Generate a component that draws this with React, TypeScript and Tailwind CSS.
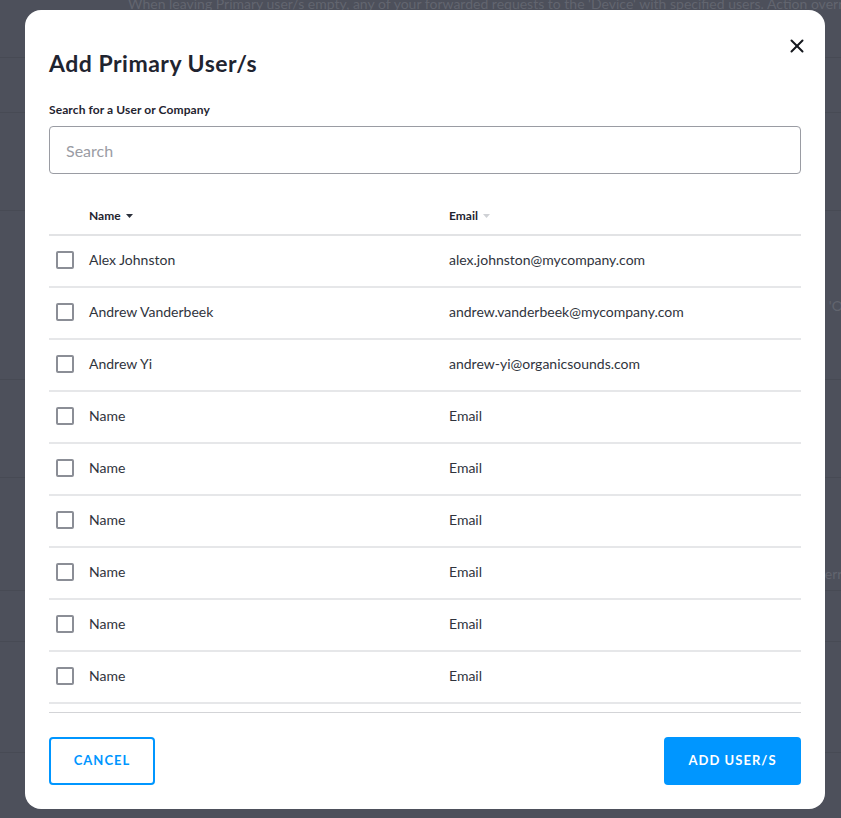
import { X } from "lucide-react";

interface User {
  name: string;
  email: string;
}

const users: User[] = [
  { name: "Alex Johnston", email: "alex.johnston@mycompany.com" },
  { name: "Andrew Vanderbeek", email: "andrew.vanderbeek@mycompany.com" },
  { name: "Andrew Yi", email: "andrew-yi@organicsounds.com" },
  { name: "Name", email: "Email" },
  { name: "Name", email: "Email" },
  { name: "Name", email: "Email" },
  { name: "Name", email: "Email" },
  { name: "Name", email: "Email" },
  { name: "Name", email: "Email" },
  { name: "Name", email: "Email" },
  { name: "Name", email: "Email" },
];

// page sitting behind the dimmed overlay
function BackgroundPage() {
  const rows = [55, 98, 169, 98, 113, 51, 111];
  return (
    <div className="h-[818px] overflow-hidden bg-[#4d505b] text-[14px] text-[#62656f]">
      <div className="h-[65px] border-b border-[#474a54] pl-[128px] -mt-[7px] whitespace-nowrap">
        When leaving Primary user/s empty, any of your forwarded requests to the 'Device' with specified users. Action overrides
      </div>
      {rows.map((h, i) => (
        <div
          key={i}
          style={{ height: h }}
          className="flex items-center justify-end border-b border-[#474a54] whitespace-nowrap"
        >
          {i === 2 && <span className="-mr-[14px] pt-[20px]">'Off'</span>}
          {i === 4 && <span className="-mr-[20px] pt-[78px]">override</span>}
        </div>
      ))}
    </div>
  );
}

function Checkbox() {
  return <span className="block h-[18px] w-[18px] rounded-[2px] border-2 border-[#8b8e96] bg-white" />;
}

function Caret({ light }: { light?: boolean }) {
  return (
    <svg width="7" height="4" viewBox="0 0 7 4" className="ml-[5px]">
      <path d="M0 0h7L3.5 4z" fill={light ? "#cfd1d5" : "#2b303b"} />
    </svg>
  );
}

export default function App() {
  return (
    <div className="relative h-[818px] w-full overflow-hidden font-['Lato',sans-serif]">
      <BackgroundPage />

      <div className="absolute inset-0 pl-[25px] pt-[10px]">
        <div className="relative flex h-[799px] w-[800px] flex-col rounded-[16px] bg-white px-6 pb-[23px] pt-[38px]">
          <button className="absolute right-[17px] top-[25px] text-[#15181e]">
            <X size={22} strokeWidth={2.2} />
          </button>

          <h2 className="text-[23px] font-bold leading-[30px] tracking-[0.5px] text-[#1f2430]">Add Primary User/s</h2>

          <label className="mt-[24px] text-[12px] font-bold leading-[16px] tracking-[0.1px] text-[#1f2430]">
            Search for a User or Company
          </label>
          <input
            placeholder="Search"
            className="mt-[8px] h-[48px] w-full shrink-0 rounded-[4px] border border-[#9a9ca3] px-4 text-[16px] text-[#333] outline-none placeholder:text-[#9a9ca4]"
          />

          <div className="mt-[22px] flex h-[40px] shrink-0 items-center border-b-2 border-[#e2e3e5] pt-[1px] text-[12px] font-bold text-[#1f2430]">
            <div className="flex w-[400px] items-center pl-[40px]">
              Name
              <Caret />
            </div>
            <div className="flex items-center">
              Email
              <Caret light />
            </div>
          </div>

          <div className="h-[477px] shrink-0 overflow-hidden border-b border-[#d3d4d7]">
            {users.map((u, i) => (
              <div
                key={i}
                className="flex h-[52px] items-center border-b-2 border-[#e6e7e9] pb-[3px] text-[14px] text-[#30343d]"
              >
                <div className="flex w-[40px] justify-start pl-[7px]">
                  <Checkbox />
                </div>
                <div className="w-[360px]">{u.name}</div>
                <div>{u.email}</div>
              </div>
            ))}
          </div>

          <div className="mt-[24px] flex justify-between">
            <button className="h-[48px] w-[106px] rounded-[4px] border-2 border-[#0096ff] text-[13px] font-bold tracking-[0.08em] text-[#0096ff]">
              CANCEL
            </button>
            <button className="h-[48px] w-[137px] rounded-[4px] bg-[#0096ff] text-[13px] font-bold tracking-[0.08em] text-white">
              ADD USER/S
            </button>
          </div>
        </div>
      </div>
    </div>
  );
}
